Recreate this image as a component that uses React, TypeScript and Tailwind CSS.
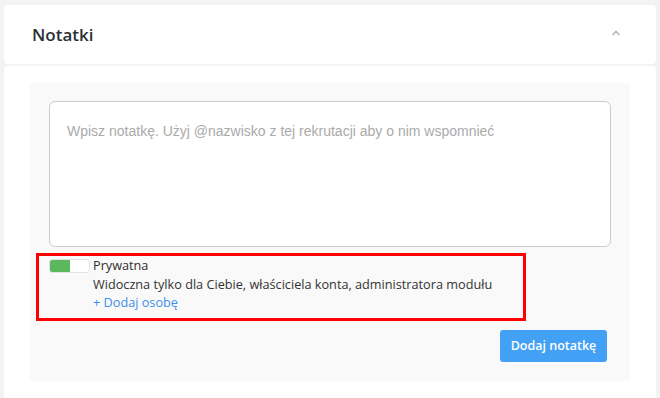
import React from "react";

export default function App() {
  return (
    <div className="w-[660px] h-[398px] overflow-hidden bg-[#f3f3f3] pt-[5px] px-[4px]" style={{ fontFamily: '"Open Sans", sans-serif' }}>
      <div className="w-[652px] flex flex-col gap-[2px]">
        <div className="bg-white rounded-[4px] h-[59px] flex items-center justify-between pl-[28px] pr-[35px]">
          <h2 className="text-[17px] font-semibold text-[#2b3039] leading-none">Notatki</h2>
          <svg width="10" height="6" viewBox="0 0 10 6" className="-mt-[3px]">
            <path d="M1.5 5 L5 1.5 L8.5 5" fill="none" stroke="#b5b5b5" strokeWidth="1.6" />
          </svg>
        </div>
        <div className="bg-white rounded-t-[4px] h-[340px] pt-[17px] px-[26px]">
          <div className="bg-[#f9f9f9] rounded-[4px] h-[298px] pt-[18px] px-[19px] flex flex-col">
            <div className="h-[146px] bg-white border border-[#cccccc] rounded-[6px] pt-[19px] pl-[17px] text-[14px] text-[#aaaaaa]" style={{ fontFamily: '"Liberation Sans", Arial, sans-serif' }}>
              Wpisz notatkę. Użyj @nazwisko z tej rekrutacji aby o nim wspomnieć
            </div>
            <div className="mt-[6px] -ml-[13px] w-[490px] h-[68px] border-[3px] border-[#ff0000] pl-[10px] pt-0 flex gap-[3px]">
              <div className="mt-[3px] w-[41px] h-[14px] rounded-[3px] border border-[#dfe3ea] bg-white flex p-0">
                <div className="w-[20px] h-full bg-[#5cb85c] rounded-l-[2px]" />
              </div>
              <div className="flex flex-col text-[12.7px] leading-[18.5px] text-[#333333]">
                <span className="font-medium text-[#2f2f2f]">Prywatna</span>
                <span>Widoczna tylko dla Ciebie, właściciela konta, administratora modułu</span>
                <span className="text-[#3d8fe8]">+ Dodaj osobę</span>
              </div>
            </div>
            <div className="flex justify-end mt-[9px] pr-[4px]">
              <button className="h-[32px] w-[107px] bg-[#43a1f5] text-white text-[12.5px] font-semibold rounded-[3px]">
                Dodaj notatkę
              </button>
            </div>
          </div>
        </div>
      </div>
    </div>
  );
}
